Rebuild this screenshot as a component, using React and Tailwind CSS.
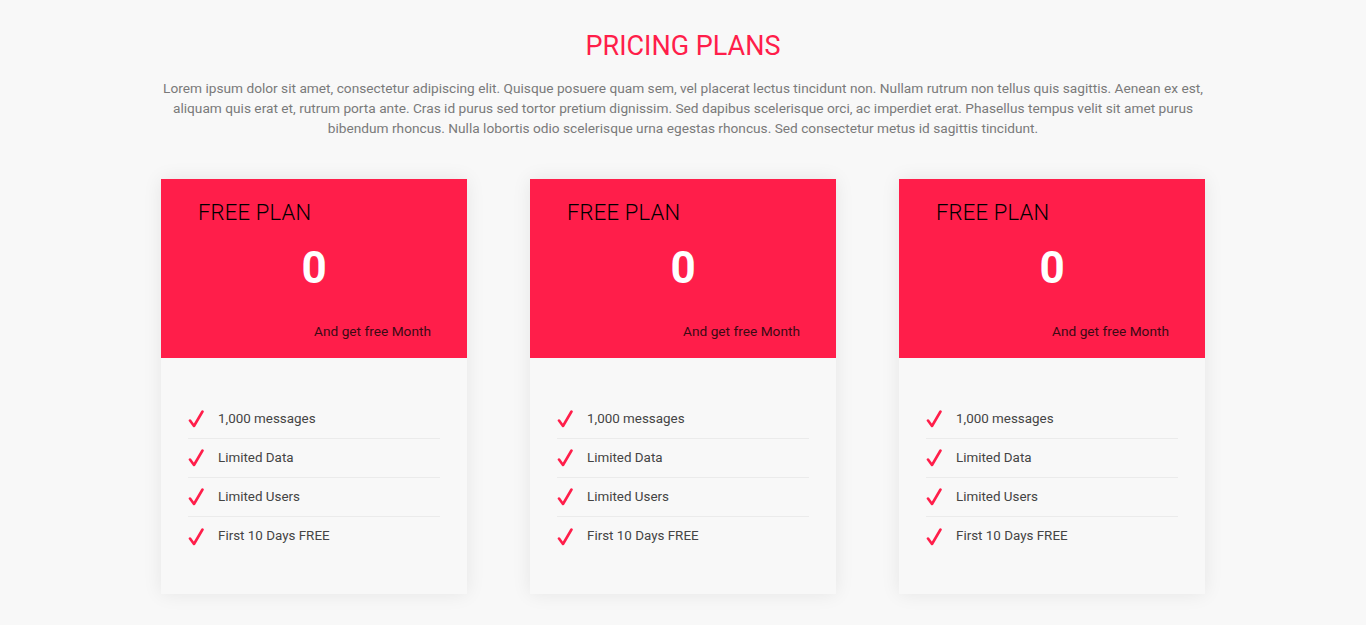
const features = ["1,000 messages", "Limited Data", "Limited Users", "First 10 Days FREE"];

const Check = () => (
  <svg width="16" height="18" viewBox="0 0 16 18" className="shrink-0">
    <path d="M2 10.5 L6 16 L14.5 1.5" fill="none" stroke="#ff1e4a" strokeWidth="2.6" strokeLinecap="round" strokeLinejoin="round" />
  </svg>
);

const PlanCard = () => (
  <div className="w-[306px] bg-[#f8f8f8] shadow-[0_0_18px_rgba(0,0,0,0.08)]">
    <div className="h-[179px] bg-[#ff1e4a] flex flex-col">
      <h3 className="pl-[37px] pt-[21px] text-[22px] leading-[26px] text-black font-light tracking-[0.2px]">FREE PLAN</h3>
      <div className="text-center text-[44px] leading-[50px] font-bold text-white mt-[17px]">0</div>
      <div className="text-right pr-[36px] mt-auto mb-[19px] text-[13.7px] leading-[16px] text-[#3b0a14]">And get free Month</div>
    </div>
    <ul className="px-[27px] pt-[42px] pb-[38px]">
      {features.map((f, i) => (
        <li
          key={f}
          className={`flex items-center h-[39px] ${i < features.length - 1 ? "border-b border-[#ebebeb]" : ""}`}
        >
          <Check />
          <span className="ml-[14px] text-[13.4px] text-[#444]">{f}</span>
        </li>
      ))}
    </ul>
  </div>
);

export default function App() {
  return (
    <div className="min-h-[625px] bg-[#f8f8f8] font-['Roboto','Noto_Sans',sans-serif] pt-[31px]">
      <h2 className="text-center text-[27px] leading-[30px] text-[#ff1e4a] font-normal">PRICING PLANS</h2>
      <p className="mx-auto mt-[17px] w-[1100px] text-center text-[13.7px] leading-[20px] text-[#7a7a7a]">
        Lorem ipsum dolor sit amet, consectetur adipiscing elit. Quisque posuere quam sem, vel placerat lectus tincidunt non. Nullam rutrum non tellus quis sagittis. Aenean ex est,
        <br />
        aliquam quis erat et, rutrum porta ante. Cras id purus sed tortor pretium dignissim. Sed dapibus scelerisque orci, ac imperdiet erat. Phasellus tempus velit sit amet purus
        <br />
        bibendum rhoncus. Nulla lobortis odio scelerisque urna egestas rhoncus. Sed consectetur metus id sagittis tincidunt.
      </p>
      <div className="mt-[41px] flex justify-center gap-[63px]">
        <PlanCard />
        <PlanCard />
        <PlanCard />
      </div>
    </div>
  );
}
